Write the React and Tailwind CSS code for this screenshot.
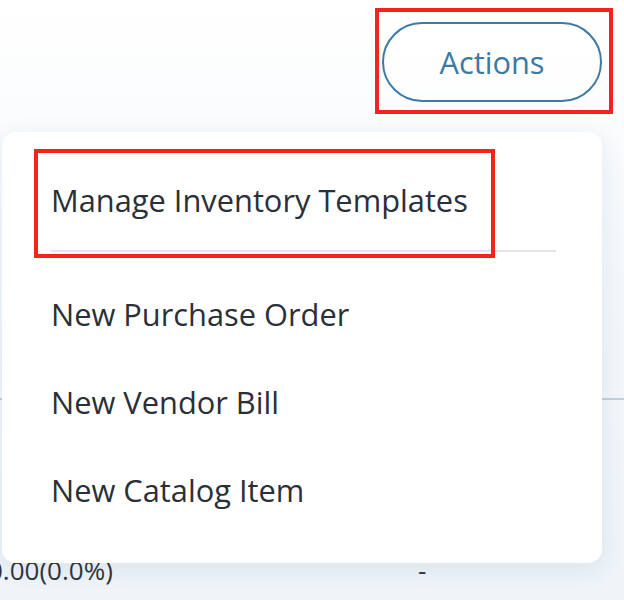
import React from "react";

const items = ["New Purchase Order", "New Vendor Bill", "New Catalog Item"];

export default function App() {
  return (
    <div className="relative w-[624px] h-[600px] overflow-hidden bg-gradient-to-b from-white via-[#f3f7fa] to-[#eef4f8] font-['Open_Sans',sans-serif]">
      {/* page content behind the menu */}
      <div className="flex justify-end pt-[22px] pr-[22px]">
        <button className="w-[220px] h-[80px] rounded-full border-2 border-[#3c7ba3] bg-white/60 text-[#3b7aa2] text-[30.8px] leading-none flex items-center justify-center">
          Actions
        </button>
      </div>
      <div className="h-[296px]" />
      <div className="border-t-2 border-[#bfd0dc]">
        <div className="h-[150px]" />
        <div className="flex items-center h-[40px] text-[#2f343b] text-[26px]">
          <span className="-ml-[12px] w-[430px]">0.00(0.0%)</span>
          <span>-</span>
        </div>
      </div>

      {/* dropdown menu */}
      <div className="absolute left-[2px] top-[132px] w-[600px] rounded-[14px] bg-white shadow-[0_6px_24px_rgba(40,80,120,0.10)] pt-[18px] pb-[29px] text-[#2b3038] text-[30.8px] leading-none">
        <div className="h-[100px] flex items-center pl-[49px]">Manage Inventory Templates</div>
        <div className="ml-[49px] w-[505px] h-[2px] bg-[#e4e4e6]" />
        <div className="pt-[18px]">
          {items.map((t) => (
            <div key={t} className="h-[88px] flex items-center pl-[49px]">
              {t}
            </div>
          ))}
        </div>
      </div>

      {/* annotation boxes */}
      <div className="absolute left-[375px] top-[8px] w-[238px] h-[106px] border-[4px] border-[#f3241c]" />
      <div className="absolute left-[34px] top-[149px] w-[461px] h-[109px] border-[4px] border-[#f3241c]" />
    </div>
  );
}
